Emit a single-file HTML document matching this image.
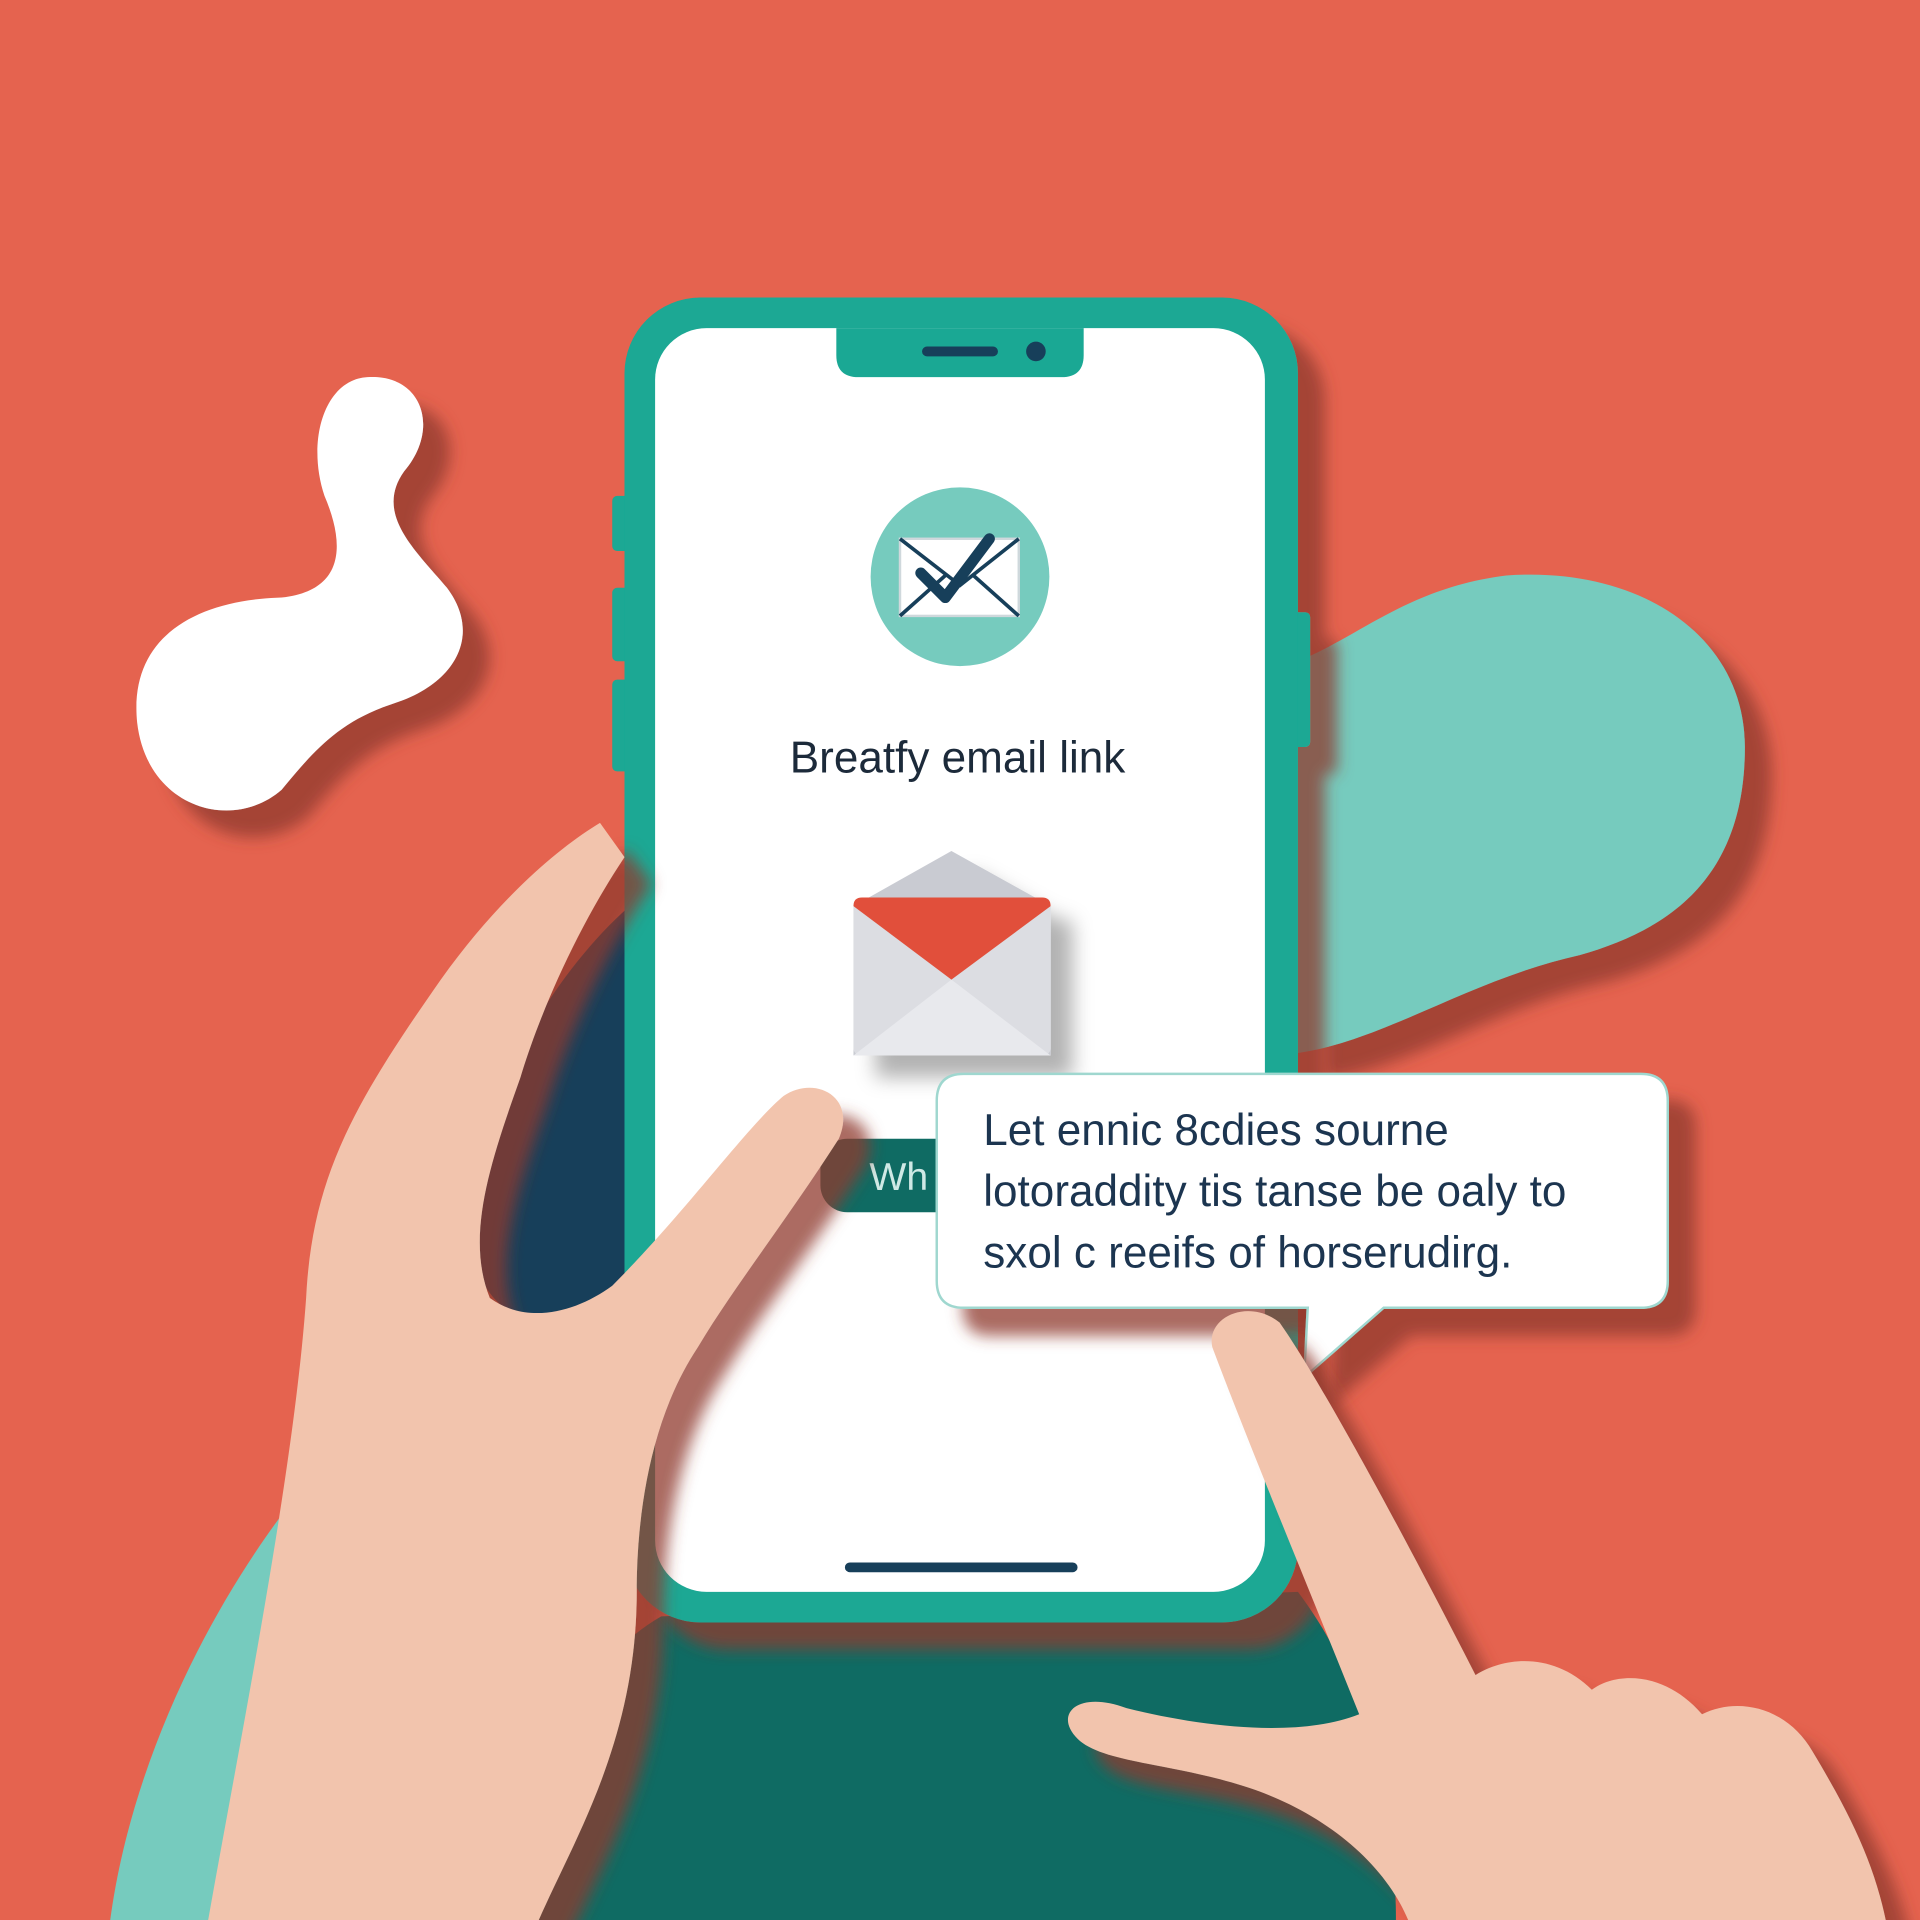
<!DOCTYPE html>
<html><head><meta charset="utf-8"><style>
html,body{margin:0;padding:0;background:#e5634f;}
svg{display:block;width:1920px;height:1920px}
text{font-family:"Liberation Sans",sans-serif}
</style></head><body>
<svg viewBox="0 0 1568 1568" xmlns="http://www.w3.org/2000/svg">
<defs>
<filter id="sh" x="-20%" y="-20%" width="150%" height="150%">
<feGaussianBlur in="SourceAlpha" stdDeviation="6"/>
<feOffset dx="22" dy="22" result="o"/>
<feFlood flood-color="#8f3a2f" flood-opacity="0.75"/>
<feComposite in2="o" operator="in"/>
<feMerge><feMergeNode/><feMergeNode in="SourceGraphic"/></feMerge>
</filter>
<filter id="sh2" x="-20%" y="-20%" width="150%" height="150%">
<feGaussianBlur in="SourceAlpha" stdDeviation="8"/>
<feOffset dx="18" dy="18" result="o"/>
<feFlood flood-color="#000" flood-opacity="0.3"/>
<feComposite in2="o" operator="in"/>
<feMerge><feMergeNode/><feMergeNode in="SourceGraphic"/></feMerge>
</filter>
</defs>
<rect width="1568" height="1568" fill="#e5634f"/>
<path filter="url(#sh)" fill="#fff" d="M300 308C345 305 360 350 330 385C305 420 340 450 365 480C395 520 370 560 320 575C275 590 255 615 230 645C190 680 120 660 112 590C105 520 160 490 230 488C285 482 280 440 265 405C250 360 265 310 300 308Z"/>
<path filter="url(#sh)" fill="#76cbbe" d="M1060 540C1110 520 1150 480 1230 470C1340 462 1425 520 1425 610C1425 720 1360 760 1290 780C1200 800 1130 850 1060 860Z"/>
<path fill="#76cbbe" d="M90 1568C110 1420 190 1280 260 1200L420 1180L300 1568Z"/>
<path fill="#0f6b63" d="M430 1568C440 1450 470 1360 540 1320L1060 1300C1120 1380 1140 1480 1140 1568Z"/>
<path fill="#173f5a" d="M520 735C460 785 410 870 390 940C370 1010 390 1075 440 1078C480 1075 520 1040 545 1010Z"/>
<g filter="url(#sh)">
<rect x="500" y="405" width="14" height="45" rx="4" fill="#1aa894"/>
<rect x="500" y="480" width="14" height="60" rx="4" fill="#1aa894"/>
<rect x="500" y="555" width="14" height="75" rx="4" fill="#1aa894"/>
<rect x="1056" y="500" width="14" height="110" rx="4" fill="#1aa894"/>
<rect x="510" y="243" width="550" height="1082" rx="62" fill="#1aa894"/>
</g>
<rect x="535" y="268" width="498" height="1032" rx="42" fill="#fff"/>
<path d="M683 268H885V290Q885 308 867 308H701Q683 308 683 290Z" fill="#1aa894"/>
<rect x="753" y="283" width="62" height="8" rx="4" fill="#173f5a"/>
<circle cx="846" cy="287" r="8" fill="#173f5a"/>
<circle cx="784" cy="471" r="73" fill="#76cbbe"/>
<rect x="735" y="440" width="97" height="63" fill="#fff" stroke="#cfd8dc" stroke-width="2"/>
<path d="M735 440L784 478L832 440M735 503L772 470M832 503L795 470" fill="none" stroke="#173f5a" stroke-width="3"/>
<path d="M752 468L772 488L808 440" fill="none" stroke="#173f5a" stroke-width="9" stroke-linecap="round" stroke-linejoin="round"/>
<text x="782" y="631" font-size="36" fill="#1c2a3a" text-anchor="middle">Breatfy email link</text>
<g filter="url(#sh2)">
<path d="M697 740L777 695L858 740V862H697Z" fill="#c9cbd2"/>
<rect x="697" y="735" width="161" height="127" rx="6" fill="#dcdde2"/>
<path d="M697 862L777 800L858 862Z" fill="#e8e9ed"/>
<path d="M697 740Q697 733 704 733H851Q858 733 858 740L777 800Z" fill="#e1503a"/>
</g>
<rect x="670" y="930" width="120" height="60" rx="22" fill="#0f6b63"/>
<text x="710" y="972" font-size="32" fill="#cfe9e5">Wh</text>
<path filter="url(#sh)" fill="#f2c4ad" d="M170 1568C200 1400 240 1200 250 1060C255 960 290 900 360 800C410 730 460 690 490 672L510 700C470 760 440 830 425 880C400 950 380 1010 400 1060C430 1082 470 1072 500 1050C560 990 610 920 640 895C665 878 700 895 685 930C640 1000 600 1050 570 1100C530 1160 520 1240 520 1300C520 1420 470 1500 440 1568Z"/>
<g filter="url(#sh)">
<path d="M787 877H1340Q1362 877 1362 899V1046Q1362 1068 1340 1068H1130L1065 1125L1068 1068H787Q765 1068 765 1046V899Q765 877 787 877Z" fill="#fff" stroke="#9fd7cf" stroke-width="2"/>
</g>
<text font-size="36" fill="#1c3550"><tspan x="803" y="935">Let ennic 8cdies sourne</tspan><tspan x="803" y="985">lotoraddity tis tanse be oaly to</tspan><tspan x="803" y="1035">sxol c reeifs of horserudirg.</tspan></text>
<rect x="690" y="1276" width="190" height="8" rx="4" fill="#173f5a"/>
<path filter="url(#sh)" fill="#f2c4ad" d="M990 1100C985 1075 1020 1060 1045 1080C1080 1130 1150 1260 1205 1368C1230 1352 1270 1350 1300 1380C1320 1365 1360 1365 1390 1400C1420 1385 1460 1395 1480 1430C1510 1480 1530 1520 1540 1568H1150C1130 1520 1080 1480 1020 1460C960 1440 900 1440 880 1420C860 1400 880 1380 920 1395C980 1410 1060 1420 1110 1400C1070 1300 1020 1180 990 1100Z"/>
</svg>
</body></html>
